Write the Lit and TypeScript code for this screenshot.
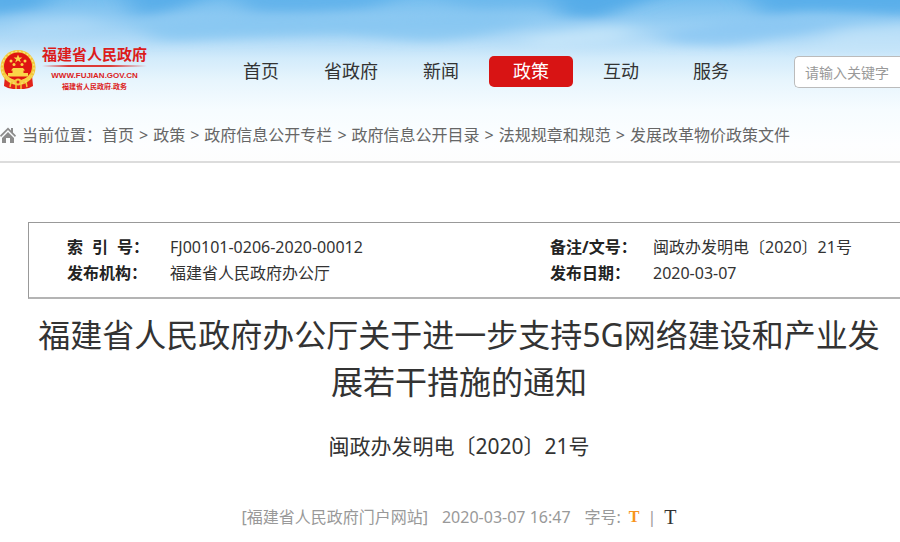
import { LitElement, html, css, svg } from "lit";
import { customElement } from "lit/decorators.js";

const sans = css`"Noto Sans", "Noto Sans CJK SC", sans-serif`;

@customElement("sky-backdrop")
class SkyBackdrop extends LitElement {
  static styles = css`
    :host {
      position: absolute;
      inset: 0;
      z-index: -1;
      overflow: hidden;
    }
    .sky {
      display: block;
      width: 100%;
      height: 100%;
    }
  `;

  render() {
    return html`<svg class="sky" viewBox="0 0 900 162" preserveAspectRatio="none" aria-hidden="true">
      <defs>
        <linearGradient id="air" x1="0" y1="0" x2="0" y2="1">
          <stop offset="0" stop-color="#78bfef" />
          <stop offset="0.13" stop-color="#93ccf3" />
          <stop offset="0.25" stop-color="#b2dbf7" />
          <stop offset="0.36" stop-color="#d2ebfb" />
          <stop offset="0.5" stop-color="#e7f5fd" />
          <stop offset="0.68" stop-color="#f6fcff" />
          <stop offset="0.9" stop-color="#fdfeff" />
          <stop offset="1" stop-color="#fdfdfd" />
        </linearGradient>
        <filter id="soft" x="-30%" y="-80%" width="160%" height="260%">
          <feGaussianBlur stdDeviation="14 5" />
        </filter>
      </defs>
      <rect width="900" height="162" fill="url(#air)" />
      <g filter="url(#soft)">
        ${svg`
          <path fill="#4ba6e7" opacity=".7" d="M-30-10H60L40 8-30 18Z" />
          <path fill="#4ba6e7" opacity=".7" d="M120-12H225L180 8 135 18Z" />
          <path fill="#58aeea" opacity=".7" d="M225-12H420L370 8 310 12 250 12Z" />
          <path fill="#64b4ec" opacity=".5" d="M420-12H560V6L470 10Z" />
          <path fill="#82c4f1" opacity=".7" d="M130 22 260 16 380 18 490 14 540 20 480 36 430 42 340 34 240 38 160 42Z" />
          <path fill="#4ca7e7" opacity=".8" d="M550-12H680L630 6 600 18 560 16Z" />
          <path fill="#4fa9e8" opacity=".75" d="M740-12H930V16L860 12 800 10 765 16Z" />
          <path fill="#84c5f2" opacity=".7" d="M660 32 740 20 860 20 800 34 730 46 670 44Z" />
          <path fill="#bfe2f9" opacity=".4" d="M20 20 80 14 110 24 80 34 10 38Z" />
          <path fill="#d3ecfb" opacity=".55" d="M520 38 600 26 640 26 620 42 540 48Z" />
          <path fill="#cbe8fa" opacity=".55" d="M840 30 930 22V50H810Z" />
        `}
      </g>
    </svg>`;
  }
}

@customElement("site-logo")
class SiteLogo extends LitElement {
  static styles = css`
    :host {
      display: block;
      flex: none;
    }
    .logo {
      display: flex;
      align-items: center;
      gap: 5px;
      color: #dc1c1c;
      text-decoration: none;
      font-family: ${sans};
      font-weight: 700;
    }
    .emblem {
      width: 37px;
      height: 40px;
      flex: none;
    }
    .words {
      display: flex;
      flex-direction: column;
      align-items: center;
    }
    .name {
      font-size: 15px;
      line-height: 16px;
    }
    .rule {
      width: 100%;
      height: 2px;
      margin: 3px 0 4px;
      background: linear-gradient(90deg, transparent, #dd3a36 25%, #dd3a36 65%, transparent);
    }
    .url {
      font: 700 8px/10px "Liberation Sans", sans-serif;
    }
    .sub {
      font-size: 7px;
      line-height: 12px;
    }
  `;

  render() {
    return html`<a class="logo" href="#">
      <svg class="emblem" viewBox="0 0 37 40" aria-hidden="true">
        <path d="M5 25 4 36l4 2 5 1h11l5-1 4-2-1-11Z" fill="#e2231a" />
        <path d="M10 37l1-5m5 7v-5m5 5v-5m6 3-1-5" stroke="#f5c63a" stroke-width="1.500" fill="none" />
        <circle cx="18" cy="17.500" r="17.500" fill="#f3c838" />
        <circle cx="18" cy="17.500" r="16" fill="none" stroke="#f9e07c" stroke-width="1.500" stroke-dasharray="2 2" />
        <circle cx="18" cy="16.500" r="14" fill="#df1512" />
        <path d="m18 4.500 1.200 3h3.200l-2.600 2 1 3-2.800-1.900-2.800 1.900 1-3-2.600-2h3.200Z" fill="#fbd548" />
        <g fill="#fbd548">
          <circle cx="11" cy="11" r="1.500" />
          <circle cx="25" cy="11" r="1.500" />
          <circle cx="14" cy="14.500" r="1.500" />
          <circle cx="22" cy="14.500" r="1.500" />
          <path d="M13 18h10l2 2.500h-1.500V23H28v3.500H8V23h4.500v-2.500H11Z" />
        </g>
        <path d="M5 25c3 5 7 6.500 13 6.500S28 30 31 25" fill="none" stroke="#f7cf48" stroke-width="3" />
        <circle cx="18" cy="32" r="3.500" fill="#f6cb43" />
        <circle cx="18" cy="32" r="1.500" fill="#e2231a" />
      </svg>
      <span class="words">
        <span class="name">福建省人民政府</span>
        <span class="rule"></span>
        <span class="url">WWW.FUJIAN.GOV.CN</span>
        <span class="sub">福建省人民政府.政务</span>
      </span>
    </a>`;
  }
}

@customElement("app-root")
class AppRoot extends LitElement {
  static styles = css`
    :host {
      display: block;
      min-height: 100vh;
      overflow: hidden;
      background: #fff;
      color: #333;
      font: 16px/26px ${sans};
    }
    a {
      color: inherit;
      text-decoration: none;
    }
    .header {
      position: relative;
      z-index: 0;
      padding-top: 46px;
      border-bottom: 2px solid #dcdcdc;
    }
    .bar {
      display: flex;
      align-items: flex-start;
    }
    .nav {
      display: flex;
      gap: 6px;
      margin: 10px 41px 0 72px;
    }
    .nav a {
      width: 84px;
      border-radius: 5px;
      font-size: 18px;
      line-height: 31px;
      text-align: center;
    }
    .nav .current {
      background: #d81414;
      color: #fff;
    }
    .search {
      flex: 1;
      min-width: 0;
      margin-top: 10px;
    }
    .search input {
      box-sizing: border-box;
      width: 100%;
      height: 32px;
      padding: 0 0 0 10px;
      border: 1px solid #bbb;
      border-right: 0;
      border-radius: 5px 0 0 5px;
      outline: 0;
      background: #fff;
      font: 14px ${sans};
    }
    .search input::placeholder {
      color: #999;
      opacity: 1;
    }
    .crumbs {
      display: flex;
      align-items: center;
      margin-top: 30px;
      padding-bottom: 14px;
      color: #666;
      line-height: 24px;
      white-space: nowrap;
    }
    .home {
      width: 16px;
      height: 18px;
      margin-right: 6px;
    }
    .sep {
      padding: 0 5px;
    }
    .content {
      padding: 59px 0 0 28px;
    }
    .info {
      display: grid;
      grid-template-columns: 103px 380px 103px 1fr;
      margin: 0;
      padding: 11px 0 11px 38px;
      border: 1px solid #999;
      border-bottom: 2px solid #b4b4b4;
      border-right: 0;
      white-space: nowrap;
    }
    .info dt {
      color: #222;
      font-weight: 700;
    }
    .info dd {
      margin: 0;
    }
    .spread {
      display: flex;
      gap: 9px;
    }
    .article {
      padding: 12px 10px 0 0;
      text-align: center;
    }
    .title {
      margin: 0;
      font-size: 32px;
      font-weight: 400;
      line-height: 47px;
    }
    .number {
      margin: 26px 0 0;
      font-size: 21px;
      line-height: 31px;
    }
    .meta {
      display: flex;
      justify-content: center;
      gap: 14px;
      margin-top: 42px;
      color: #999;
    }
    .sizes {
      display: flex;
      gap: 8px;
    }
    .sizes button {
      padding: 0;
      border: 0;
      background: none;
      color: #333;
      font: 20px/24px "Liberation Serif", serif;
    }
    .sizes .small {
      color: #f7941d;
      font-size: 16px;
      font-weight: 700;
    }
  `;

  private nav = ["首页", "省政府", "新闻", "政策", "互动", "服务"];
  private trail = ["首页", "政策", "政府信息公开专栏", "政府信息公开目录", "法规规章和规范", "发展改革物价政策文件"];

  render() {
    return html`
      <header class="header">
        <sky-backdrop></sky-backdrop>
        <div class="bar">
          <site-logo></site-logo>
          <nav class="nav">
            ${this.nav.map((n) => html`<a href="#" class=${n === "政策" ? "current" : ""}>${n}</a>`)}
          </nav>
          <form class="search">
            <input type="text" placeholder="请输入关键字" aria-label="请输入关键字" />
          </form>
        </div>
        <nav class="crumbs">
          <svg class="home" viewBox="0 0 16 18" aria-hidden="true">
            <path d="m0 9.500 8-8 3 3V2h2v4.500l3 3-1 1.500-7-7-7 7Z" fill="#8c8c8c" />
            <path d="m8 6 6 6v5h-4v-5H6v5H2v-5Z" fill="#8c8c8c" />
          </svg>
          <span>当前位置：</span>
          ${this.trail.map((t, i) => html`${i ? html`<span class="sep">&gt;</span>` : ""}<a href="#">${t}</a>`)}
        </nav>
      </header>
      <main class="content">
        <dl class="info">
          <dt class="spread"><span>索</span><span>引</span><span>号：</span></dt>
          <dd>FJ00101-0206-2020-00012</dd>
          <dt>备注/文号：</dt>
          <dd>闽政办发明电〔2020〕21号</dd>
          <dt>发布机构：</dt>
          <dd>福建省人民政府办公厅</dd>
          <dt>发布日期：</dt>
          <dd>2020-03-07</dd>
        </dl>
        <article class="article">
          <h1 class="title">福建省人民政府办公厅关于进一步支持5G网络建设和产业发展若干措施的通知</h1>
          <p class="number">闽政办发明电〔2020〕21号</p>
          <div class="meta">
            <span>[福建省人民政府门户网站]</span>
            <time datetime="2020-03-07T16:47">2020-03-07 16:47</time>
            <div class="sizes">
              <span>字号:</span>
              <button class="small" type="button">T</button>
              <span>|</span>
              <button type="button">T</button>
            </div>
          </div>
        </article>
      </main>
    `;
  }
}
